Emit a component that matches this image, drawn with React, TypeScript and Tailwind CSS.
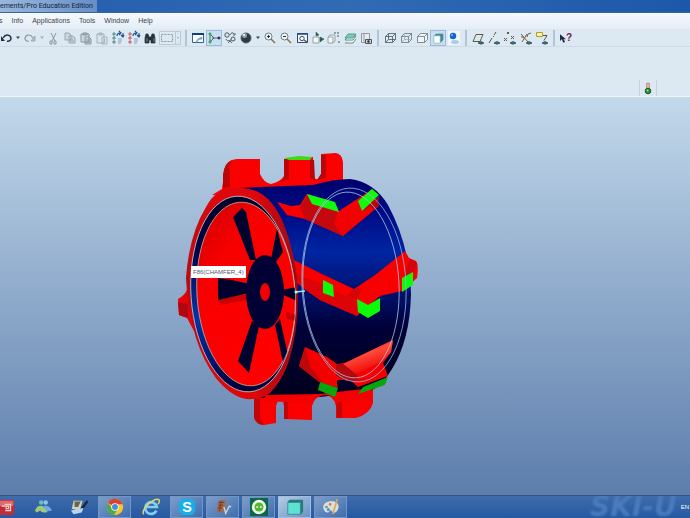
import React from 'react';

function Icon({ children }: { children: React.ReactNode }) {
  return (
    <svg viewBox="0 0 16 16" className="w-4 h-4 shrink-0" fill="none" stroke="#4b5563" strokeWidth="1" aria-hidden="true">
      {children}
    </svg>
  );
}

function Eye() {
  return <path d="M8 13Q11 10 14 13Q11 15.500 8 13Z" fill="#3f7470" stroke="#213e49" strokeWidth=".6" />;
}

function Tool({ label, active, children }: { label: string; active?: boolean; children: React.ReactNode }) {
  return (
    <button
      type="button"
      aria-label={label}
      className={`w-4 h-4 shrink-0 flex items-center justify-center ${active ? 'bg-[#c8dff1] outline outline-[#9dbbd9] -outline-offset-1' : ''}`}
    >
      <Icon>{children}</Icon>
    </button>
  );
}

function Caret({ label, faded }: { label: string; faded?: boolean }) {
  return (
    <button type="button" aria-label={label} className="w-2 h-4 shrink-0 flex items-center justify-center">
      <svg viewBox="0 0 4 3" className="w-1 h-[3px]" aria-hidden="true">
        <path d="M0 .5H4L2 3Z" fill={faded ? '#a5afb8' : '#30465f'} />
      </svg>
    </button>
  );
}

function Separator() {
  return (
    <div className="w-2 h-4 shrink-0 flex justify-center">
      <div className="w-[2px] h-full bg-[#b3c6d6]" />
    </div>
  );
}

function RegenIcon({ color }: { color: string }) {
  return (
    <>
      <path d="M3 3h2v2H3zM3 7h2v2H3zM3 11h2v2H3z" stroke={color} strokeWidth=".9" />
      <path d="M8 9h4M8 11h4M8 13h3" stroke="#7b8fa5" strokeWidth=".8" />
      <path d="M7 6q0-3 3-3M9 1l2 2-2 2M13 3v3M11 5l2 2 1-2" stroke="#1d4c91" strokeWidth="1.1" />
    </>
  );
}

function Toolbar() {
  return (
    <div className="flex items-center h-[18px] -ml-[2px] border-b border-[#cddbe5]">
      <Tool label="Undo">
        <path d="M5 8C8 3 13 5 13 9Q12 12 9 11" stroke="#1e2f43" strokeWidth="1.4" />
        <path d="M3 6v5h4z" fill="#1e2f43" stroke="none" />
      </Tool>
      <Caret label="Undo list" />
      <Tool label="Redo">
        <path d="M11 8C8 3 3 5 3 9Q4 12 7 11" stroke="#8e9ba6" strokeWidth="1.2" />
        <path d="M13 6v5H9z" fill="#b5c0c9" stroke="#8e9ba6" strokeWidth=".7" />
      </Tool>
      <Caret label="Redo list" faded />
      <Tool label="Cut">
        <path d="M5 3l4 8M10 3L6 11M4 11h2v3H4zM8 11h2v3H8z" stroke="#8b98a4" />
      </Tool>
      <Tool label="Copy">
        <path d="M3 3h4l2 2v5H3zM7 6h4l2 2v5H7z" fill="#cdd7df" stroke="#98a6b2" />
        <path d="M8 9h3M8 11h4" stroke="#98a6b2" />
      </Tool>
      <Tool label="Paste">
        <path d="M3 4h8v8H3zM5 3h4v2H5zM7 7h4l2 2v5H7z" fill="#cdd7df" stroke="#8794a0" />
        <path d="M8 10h4M8 12h4" stroke="#8794a0" />
      </Tool>
      <Tool label="Paste special">
        <path d="M3 4h7v9H3zM5 3h3v2H5zM8 7h5v7H8z" fill="#dce5eb" stroke="#a5b0ba" />
        <path d="M10.500 9v4" stroke="#a5b0ba" />
      </Tool>
      <Tool label="Regenerate"><RegenIcon color="#46807c" /></Tool>
      <Tool label="Regenerate manager"><RegenIcon color="#c54a52" /></Tool>
      <Tool label="Find">
        <path d="M4 4h2l1 3v6H3V8zM10 4h2l1 4v5H9V7zM7 7h2v3H7z" fill="#273139" stroke="#273139" strokeWidth=".7" />
        <path d="M5 8v4M12 8v4" stroke="#8e9d9a" strokeWidth=".8" />
      </Tool>
      <button type="button" aria-label="Select" className="w-6 h-4 shrink-0 flex items-center justify-center">
        <svg viewBox="0 0 22 14" className="w-[22px] h-[14px]" fill="none" aria-hidden="true">
          <path d="M.5.5h21v13H.5zM16.500.5v13" stroke="#bdcad4" />
          <path d="M2.500 3.500h11v7h-11z" stroke="#8c98a3" strokeDasharray="2 1" />
          <path d="M18 6h2l-1 2z" fill="#9faab4" />
        </svg>
      </button>
      <Separator />
      <Tool label="Repaint">
        <path d="M2.500 3.500h11v9h-11z" fill="#fff" stroke="#365f91" />
        <path d="M2 4h12" stroke="#123e7e" strokeWidth="2" />
        <path d="M6 12q1-4 6-5v2q-4 0-5 3z" fill="#67a2bd" stroke="#7fa9c0" strokeWidth=".6" />
      </Tool>
      <Tool label="Spin center" active>
        <path d="M4 4v8M6 8h7M5 5l3 3-3 3" stroke="#4c6674" />
        <path d="M3 3h2v2H3zM3 11h2v2H3z" fill="#46b875" stroke="#34a35c" strokeWidth=".8" />
        <path d="M12 7h2v2h-2z" fill="#4b263d" stroke="#4b263d" strokeWidth=".6" />
      </Tool>
      <Tool label="Orient mode">
        <circle cx="5" cy="5" r="2.200" />
        <circle cx="11" cy="9" r="2" />
        <path d="M8 5q2-4 4-1M4 9q1 3 5 1M6 13l2-2 2 2M11 5h2V3" stroke="#4b5165" strokeWidth=".9" />
      </Tool>
      <Tool label="Appearance">
        <circle cx="8" cy="8" r="5" fill="#303940" stroke="#51606b" />
        <circle cx="6.500" cy="5.500" r="2.500" fill="#8f9ca5" stroke="none" />
        <circle cx="6" cy="5" r="1" fill="#fff" stroke="none" />
      </Tool>
      <Caret label="Appearance list" />
      <Tool label="Zoom in">
        <circle cx="6.500" cy="6.500" r="3.500" fill="#eff5f7" stroke="#747b80" />
        <path d="M9 9l4 4" stroke="#8d6a4b" strokeWidth="1.4" />
        <path d="M5 6.500h3M6.500 5v3" stroke="#1f3349" />
      </Tool>
      <Tool label="Zoom out">
        <circle cx="6.500" cy="6.500" r="3.500" fill="#eff5f7" stroke="#747b80" />
        <path d="M9 9l4 4" stroke="#8d6a4b" strokeWidth="1.4" />
        <path d="M5 6.500h3" stroke="#1f3349" />
      </Tool>
      <Tool label="Refit">
        <path d="M3.500 3.500h10v9h-10z" fill="#eff5f7" stroke="#304c6b" />
        <path d="M3 4h11" stroke="#274b7b" strokeWidth="1.5" />
        <circle cx="8" cy="8.500" r="2.200" />
        <path d="M10 10l3 2" strokeWidth="1.3" />
      </Tool>
      <Tool label="Reorient">
        <path d="M3 7h6v6H3z" fill="#f2f6f7" stroke="#94a2ab" />
        <path d="M6 2v4l3-1zM10 7l4 2-4 3z" fill="#2b6059" stroke="#255757" strokeWidth=".5" />
      </Tool>
      <Tool label="Saved views">
        <path d="M2 7l2-2h5v6l-2 2H2zM2 7h5v6" fill="#f2f6f7" stroke="#94a2ab" />
        <path d="M8 3h2M11 3h2M11 6h2M12 12h2" stroke="#4b5965" />
      </Tool>
      <Tool label="Layers">
        <path d="M3 10l3-4h8l-3 4zM3 13h8l3-4" fill="#eef8f5" stroke="#47776e" strokeWidth=".8" />
        <path d="M3 8l3-4h8l-3 4z" fill="#78cfb5" stroke="#418d7b" strokeWidth=".8" />
      </Tool>
      <Tool label="View manager">
        <path d="M3.500 3.500h8v9h-8zM6 3v9" fill="#e7edf0" stroke="#909ba4" />
        <path d="M7.500 9.500h6v4h-6z" fill="#d9d4c5" />
        <circle cx="10.500" cy="11.500" r="1" fill="#26323b" />
      </Tool>
      <Separator />
      <Tool label="Wireframe">
        <path d="M3.500 6.500h7v6h-7zM6.500 3.500h7v6h-7zM3.500 6.500l3-3M10.500 6.500l3-3M3.500 12.500l3-3M10.500 12.500l3-3" strokeWidth=".8" />
      </Tool>
      <Tool label="Hidden line">
        <path d="M3.500 6.500h7v6h-7zM3.500 6.500l3-3h7v6l-3 3M10.500 6.500l3-3" stroke="#68747d" strokeWidth=".8" />
        <path d="M6.500 4v5.500H13M6.500 9.500l-3 3" stroke="#a0a8ae" strokeWidth=".7" />
      </Tool>
      <Tool label="No hidden">
        <path d="M3.500 6.500h7v6h-7zM3.500 6.500l3-3h7v6l-3 3M10.500 6.500l3-3" fill="#eff4f6" stroke="#68747d" strokeWidth=".8" />
      </Tool>
      <Tool label="Shading" active>
        <path d="M4 6l2-2h7v6l-3 3H4z" fill="#3c8a91" stroke="#5f94a0" strokeWidth=".8" />
        <path d="M4 6h6v7H4z" fill="#fff" stroke="#afd9de" strokeWidth=".8" />
      </Tool>
      <Tool label="Enhanced realism">
        <path d="M2 1h12v14H2z" fill="#f0f6fb" stroke="none" />
        <ellipse cx="9" cy="12" rx="4" ry="2" fill="#a9cee9" stroke="none" />
        <circle cx="7" cy="6" r="3.200" fill="#0968cf" stroke="none" />
        <circle cx="6" cy="5" r="1" fill="#88bdf4" stroke="none" />
      </Tool>
      <Separator />
      <Tool label="Plane display"><path d="M3 11.500l3-7h7l-3 7z" stroke="#655643" /><Eye /></Tool>
      <Tool label="Axis display"><path d="M3 13l3-5M7 7l1-1M8 5l2-3" stroke="#655643" /><Eye /></Tool>
      <Tool label="Point display">
        <path d="M5 2l2 2M7 2L5 4M2 8l3 3M5 8l-3 3M9 6l3 3M12 6L9 9" stroke="#655643" />
        <Eye />
      </Tool>
      <Tool label="Coordinate display">
        <path d="M3 4l7 8M9 4L4 12M3 7h3M9 7q0-4 4-4" stroke="#755b3d" />
        <Eye />
      </Tool>
      <Tool label="Annotation display">
        <path d="M2.500 2.500h6v4h-6z" fill="#fff59c" stroke="#ab9f37" />
        <path d="M9 5.500h4l-3 5" stroke="#655643" />
        <Eye />
      </Tool>
      <Separator />
      <button type="button" aria-label="Context help" className="w-4 h-4 shrink-0 flex items-center justify-center">
        <svg viewBox="0 0 7 11" className="w-[6px] h-[10px]" aria-hidden="true">
          <path d="M0 1v8l2-2 2 4 2-1-2-3h3z" fill="#202844" />
        </svg>
        <span className="text-[10px] leading-3 font-bold text-[#70184f]">?</span>
      </button>
    </div>
  );
}

const menus = ['Info', 'Applications', 'Tools', 'Window', 'Help'];

function Wheel() {
  return (
    <svg viewBox="170 145 260 290" className="block w-[260px] h-[290px]" role="img" aria-label="Wheel model">
      <defs>
        <linearGradient id="body" x1="0" y1="0" x2="0" y2="1">
          <stop offset="0" stopColor="#00006b" />
          <stop offset=".16" stopColor="#000b86" />
          <stop offset=".33" stopColor="#0025a2" />
          <stop offset=".5" stopColor="#001373" />
          <stop offset=".68" stopColor="#000038" />
          <stop offset="1" stopColor="#00001c" />
        </linearGradient>
        <linearGradient id="bevel" x1="0" y1="0" x2="0" y2="1">
          <stop offset="0" stopColor="#000026" />
          <stop offset=".25" stopColor="#000044" />
          <stop offset=".6" stopColor="#0035a8" />
          <stop offset=".85" stopColor="#001368" />
          <stop offset="1" stopColor="#00002c" />
        </linearGradient>
        <linearGradient id="rim" x1="0" y1="0" x2="1" y2="0">
          <stop offset="0" stopColor="#b80c14" />
          <stop offset=".2" stopColor="#da080d" />
          <stop offset=".6" stopColor="#e0070b" />
          <stop offset="1" stopColor="#9a0b16" />
        </linearGradient>
        <linearGradient id="inside" x1="0" y1="0" x2=".6" y2="1">
          <stop offset="0" stopColor="#c70000" />
          <stop offset=".35" stopColor="#f80000" />
          <stop offset="1" stopColor="#ff0000" />
        </linearGradient>
        <linearGradient id="shine" x1="0" y1="0" x2=".5" y2="1">
          <stop offset="0" stopColor="#dc0000" />
          <stop offset=".5" stopColor="#ff4a3c" />
          <stop offset="1" stopColor="#ef0000" />
        </linearGradient>
        <clipPath id="bore">
          <ellipse cx="246" cy="294" rx="49" ry="92" transform="rotate(-4 246 294)" />
        </clipPath>
      </defs>

      {/* lugs behind the body */}
      <path d="M212 195L222 189L224 174Q224 160 237 159L260 159V174Q264 183 271 184Q280 182 284 176V159L313 157V175Q315 180 318 179L321 174V154L336 153Q342 154 343 162V184L300 194H230Z" fill="#fb0000" />
      <path d="M223 188V174Q225 162 233 160Q228 164 230 174V187Z" fill="#bd0508" />
      <path d="M284 159h5v20l-8 3q4-4 3-8zM314 160h-4v18l5 2zM321 155h5v23l-9 2 4-6z" fill="#bb0508" />
      <path d="M284 158L299 156L312 157L310 160L289 160Z" fill="#3bdc13" />
      <path d="M187 290Q184 296 178 299L179 315L187 318L194 331L200 310Z" fill="#e60307" />
      <path d="M178 302l10 2v14l-9-3z" fill="#b20611" />
      <path d="M254 394V416Q256 425 264 425L276 423V406Q278 399 281 399Q283 400 284 406V419L312 420V406Q315 395 325 395Q334 396 336 406V418L356 418Q370 414 373 403V384Z" fill="#fb0000" />
      <path d="M254 397l6 2v20l4 6q-9-1-10-8zM336 396l6 2v20h-5zM284 403l4-3v19h-4z" fill="#bf0709" />

      <path d="M238 188L313 185Q333 179 350 179Q374 182 388 205Q410 246 411 294Q410 340 392 369Q382 386 370 391L320 397L250 398Z" fill="url(#body)" />
      <path d="M266 395L320 394L372 388L370 399L340 402L336 404Q334 395 325 395Q316 396 312 403L262 401Z" fill="#f40000" />

      {/* tread, upper chevron */}
      <path d="M277 202L291 206L300 205L307 194L339 211L371 190L379 206L343 236L305 219L287 215Z" fill="#f70000" />
      <path d="M300 207L307 196L338 211L334 223L343 236L305 219Z" fill="#c5080d" />
      <path d="M339 212L358 201L362 211L372 207L343 236L334 224Z" fill="#f20101" />
      <path d="M362 211L379 196L378 207L373 210L371 206Z" fill="#ae0713" />
      <path d="M307 194L335 202L339 212L312 204Z M358 201L372 189L379 195L362 211Z" fill="#10fa0b" />

      {/* tread, middle chevron */}
      <path d="M288 257L322 274L354 289L375 275L405 251L409 258L416 261Q419 265 417 278L402 291L380 296L368 306L357 316L320 300L303 288L289 276Z" fill="#f90000" />
      <path d="M292 273L322 284L357 302V316L320 300L303 288Z" fill="#dd0306" />
      <path d="M354 289L362 287L357 299L347 296ZM410 259l7 4-4 10-9 4z" fill="#d0060a" />
      <path d="M323 280L333 285L334 297L323 293Z M357 299L368 305L380 298V311L368 318L358 312Z M402 278L413 272V285L402 292Z" fill="#0cfb08" />

      {/* tread, lower chevron */}
      <path d="M305 347L327 357L337 364L345 363L393 340L391 352L383 363L388 376L358 387L350 380L337 380L338 388L319 382L299 366Z" fill="#f50000" />
      <path d="M299 366L305 347L310 366L322 382L319 382Z" fill="#be070b" />
      <path d="M343 364L393 340L391 352L383 361L356 374Z" fill="url(#shine)" />
      <path d="M337 382Q345 379 355 384L352 389Q344 391 338 388Z" fill="#00002a" />
      <path d="M336 364l7 0 14 11 1 5-12 1-10-5z" fill="#b2090e" />
      <path d="M320 382L338 388L335 397L318 390Z M363 387L388 377L385 385L358 394Z" fill="#0aa50a" />

      {/* front rim */}
      <path d="M243 188C224 186 214 192 206 207Q189 235 186 278Q187 308 196 338Q203 360 215 377Q230 396 246 399Q261 400 270 393Q281 382 288 364Q298 334 298 295Q297 257 283 222Q273 200 260 193Q253 189 243 188Z" fill="url(#rim)" />
      <ellipse cx="243" cy="294" rx="52" ry="98" transform="rotate(-4 243 294)" fill="url(#bevel)" stroke="#c8cfd2" strokeWidth=".8" />
      <ellipse cx="246" cy="294" rx="49" ry="92" transform="rotate(-4 246 294)" fill="url(#inside)" stroke="#c5c7b5" strokeWidth=".7" />
      <g clipPath="url(#bore)" fill="#00002f">
        <path d="M218 299l31-5 1 5-30 6z" fill="#cb0003" />
        <path d="M286 312l10 3v6l-9-2z" fill="#c30008" />
        <path d="M233 217L242 208L246 212L256 260L250 260Z" />
        <path d="M277 229L283 252L276 262L271 259Z" />
        <path d="M218 278L232 280L249 284V293L218 300Z" />
        <path d="M252 321L259 326L249 373L238 361Z" />
        <path d="M275 325L280 319L288 355L283 362Z" />
        <path d="M281 290L297 287V301L281 294Z" />
      </g>
      <ellipse cx="265" cy="292" rx="19" ry="37" fill="#000034" />
      <ellipse cx="265" cy="292" rx="5" ry="9" fill="#f20006" />

      {/* highlighted chamfer edges */}
      <g fill="none" strokeWidth=".8">
        <ellipse cx="354" cy="285" rx="52" ry="97" transform="rotate(-3 354 285)" stroke="#8fb4e2" />
        <ellipse cx="351" cy="285" rx="48" ry="93" transform="rotate(-3 351 285)" stroke="#a7c5e2" />
        <path d="M295 292l10-1" stroke="#7df3f5" strokeWidth="1.3" />
      </g>
      <circle cx="296" cy="292" r="1.500" fill="#a7fff0" />
    </svg>
  );
}

function TaskItem({ label, open, current, children }: { label: string; open?: boolean; current?: boolean; children: React.ReactNode }) {
  return (
    <button
      type="button"
      aria-label={label}
      className={`w-[33px] h-[22px] shrink-0 flex items-center justify-center border ${
        current
          ? 'border-[#a4bddd] bg-linear-to-br from-[#b5cce5] to-[#6893c5]'
          : open
          ? 'border-[#7595c3] bg-linear-to-br from-[#7d9dcb] to-[#3e6eae]'
          : 'border-transparent'
      }`}
    >
      <svg viewBox="0 0 20 20" className="w-[18px] h-[18px]" aria-hidden="true">
        {children}
      </svg>
    </button>
  );
}

function Taskbar() {
  return (
    <footer className="flex items-center h-[23px] overflow-hidden border-t border-[#35547d] bg-linear-to-b from-[#3f6cab] to-[#2559a2]">
      <div className="flex items-center gap-[3px] -ml-[10px] shrink-0">
        <TaskItem label="Red app">
          <rect x="1" y="2" width="17" height="17" rx="2" fill="#c32c34" />
          <path d="M2 3h15v6H2z" fill="#d96a6d" />
          <path d="M4 9h4M7 7h7v7H8M9 9v3h3V9z" fill="none" stroke="#f7dedd" strokeWidth="1.2" />
        </TaskItem>
        <TaskItem label="Messenger">
          <circle cx="8" cy="5" r="2.500" fill="#65bfc1" />
          <circle cx="13" cy="5" r="2.500" fill="#8cc3e8" />
          <path d="M1 14q3-7 8-5l7 4-2 3q-6 1-7-2l-4 2z" fill="#a3c978" />
          <path d="M10 9q7-2 10 5l-6 1z" fill="#6baddf" />
        </TaskItem>
        <TaskItem label="Media">
          <path d="M4 3h10l-3 11-9-2z" fill="#d6d2b8" />
          <path d="M5 4h7l-3 6H5z" fill="#6b6652" />
          <path d="M19 2l-7 9-3 4 5-2 6-8z" fill="#17263c" />
          <path d="M1 14l8-2 6-1-2 5-9 2z" fill="#b7d5ed" />
        </TaskItem>
        <TaskItem label="Chrome" open>
          <circle cx="10" cy="10" r="9" fill="#f3c72e" />
          <path d="M10 10L2.200 5.500A9 9 0 0 1 18.500 7H10z" fill="#df4033" />
          <path d="M2.200 5.500A9 9 0 0 0 9 19l4-7-5 1z" fill="#4aaa4d" />
          <circle cx="10" cy="10" r="4.200" fill="#fff" />
          <circle cx="10" cy="10" r="3.300" fill="#458edb" />
        </TaskItem>
        <TaskItem label="Internet Explorer">
          <path d="M16 14A6.500 6.500 0 1 1 16.500 10H5" fill="none" stroke="#7bd2f5" strokeWidth="3" />
          <path d="M2 18C-2 13 14-1 19 2q1 1-1 5" fill="none" stroke="#ead466" strokeWidth="1.6" />
        </TaskItem>
        <TaskItem label="Skype" open>
          <path d="M4 1h11l4 4v10l-3 4H5l-4-4V5z" fill="#18afe9" />
          <text x="10" y="16" textAnchor="middle" fontSize="16" fontWeight="700" fill="#fff">S</text>
        </TaskItem>
        <TaskItem label="Paper tool" open>
          <path d="M5 3l8-1-1 10-4 5-5-2z" fill="#a96642" />
          <path d="M5 5h6M5 8h5M4 11h5M8 3L6 15" stroke="#60402f" />
          <path d="M11 10l2 7 4-8 2 1" fill="none" stroke="#d1d0c6" strokeWidth="1.6" />
        </TaskItem>
        <TaskItem label="Green app" open>
          <rect x="0" y="0" width="20" height="20" fill="#096947" />
          <circle cx="10" cy="10" r="8" fill="#eff8e9" />
          <circle cx="10" cy="10" r="5" fill="#58b52f" />
          <path d="M7 9h2v2H7zM11 9h2v2h-2z" fill="#c9e9b4" />
        </TaskItem>
        <TaskItem label="Model window" open current>
          <path d="M2 4l2-2h15v13l-2 3H2z" fill="#2c777f" />
          <path d="M2 5h14v13H2z" fill="#5ce2d3" stroke="#367d84" strokeWidth=".7" />
        </TaskItem>
        <TaskItem label="Paint" open>
          <path d="M2 13C-1 6 7 2 14 4q7 3 3 10-2 4-6 1-1-3-4 1-3 1-5-3z" fill="#d9dfdd" />
          <circle cx="5" cy="10" r="1.500" fill="#4cae64" />
          <circle cx="9" cy="7" r="1.500" fill="#dd7547" />
          <circle cx="7" cy="13" r="1.500" fill="#427fc9" />
          <path d="M17 1l-5 17" stroke="#dda751" strokeWidth="1.8" />
        </TaskItem>
      </div>
      <div className="ml-auto flex items-center shrink-0">
        <span className="pr-1 whitespace-nowrap text-[28px] leading-5 font-bold italic text-[#4a7bbd] blur-[1px] font-['DejaVu_Sans',sans-serif]">
          SKI-U
        </span>
        <span className="pr-px whitespace-nowrap text-[6px] leading-4 text-white">EN</span>
      </div>
    </footer>
  );
}

export default function App() {
  return (
    <div className="min-h-screen flex flex-col overflow-hidden font-['Liberation_Sans',Arial,sans-serif] bg-[#dce9f2]">
      <header>
        <div className="flex h-[13px] items-center border-b border-[#37669f] bg-linear-to-r from-[#245cac] via-[#316bb4] to-[#1c58a9]">
          <h1 className="pr-1 text-[7px] leading-3 whitespace-nowrap text-[#10213b] font-[Roboto,sans-serif] bg-linear-to-r from-[#9ab8dc] to-[#668fc6]">
            ements/Pro Education Edition
          </h1>
        </div>
        <nav className="flex items-center gap-[9px] h-4 -ml-px text-[7px] leading-3 text-[#3f454d] bg-linear-to-b from-[#f6f9fd] to-[#e4edf5]">
          <button type="button">s</button>
          {menus.map((menu) => (
            <button type="button" key={menu}>{menu}</button>
          ))}
        </nav>
        <Toolbar />
        <div className="flex justify-end items-end h-[50px] pr-[33px] border-b border-[#edf4fa]">
          <button type="button" aria-label="Regeneration status" className="w-[18px] h-4 flex items-center justify-center border-x border-[#c4d2df]">
            <Icon>
              <path d="M6.500 3h3v6h-3z" fill="#d9b3ae" stroke="#a78b89" strokeWidth=".7" />
              <circle cx="8" cy="11" r="2.800" fill="#2c8b32" stroke="#1c5b28" />
              <circle cx="7.500" cy="10.500" r="1" fill="#9de290" stroke="none" />
            </Icon>
          </button>
        </div>
      </header>

      <main className="flex-1 pl-[170px] pt-12 bg-linear-to-b from-[#c3d9eb] to-[#5d7dab]">
        <div className="relative w-[260px]">
          <Wheel />
          <div role="tooltip" className="absolute left-[21px] top-[121px] px-[2px] text-[6px] leading-3 whitespace-nowrap bg-white text-[#4c5966]">
            F86(CHAMFER_4)
          </div>
        </div>
      </main>
      <Taskbar />
    </div>
  );
}
